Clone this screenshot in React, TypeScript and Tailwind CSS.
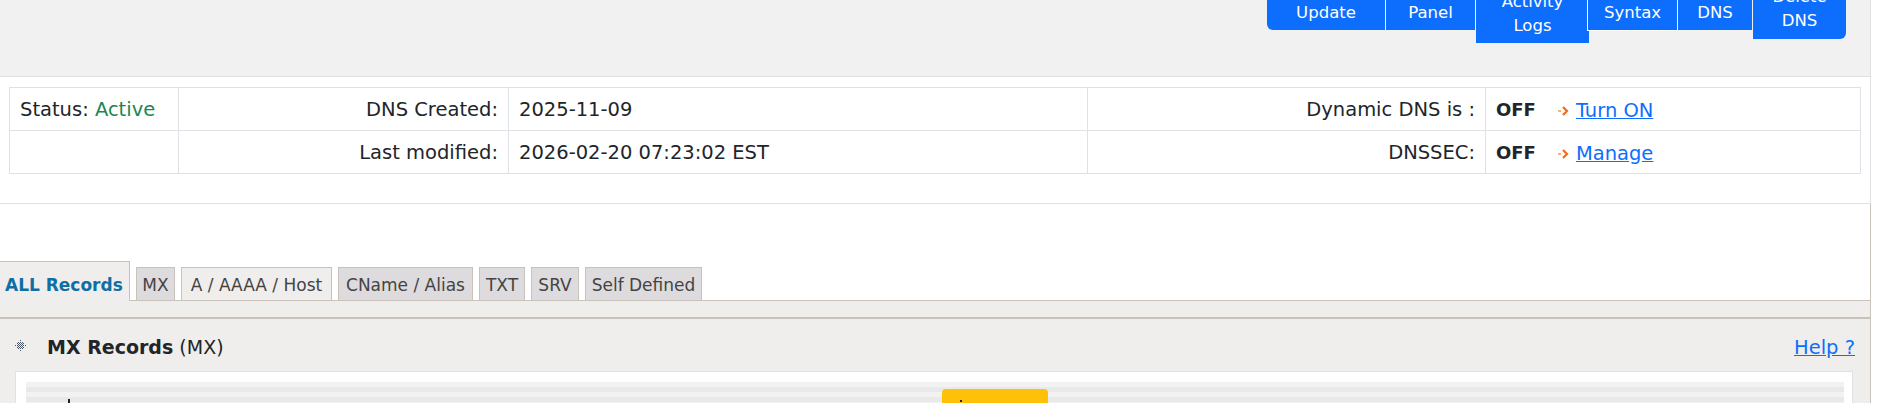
import React from 'react';

const Arrow = () => (
  <svg width="11" height="10" viewBox="0 0 11 10" className="shrink-0">
    <rect x="0" y="4" width="3" height="2" fill="#f9b27c" />
    <path d="M5 1 L9 5 L5 9" fill="none" stroke="#f26a1b" strokeWidth="2.2" />
  </svg>
);

const ActionLink = ({ label }: { label: string }) => (
  <span className="inline-flex items-center gap-[7px] ml-[22px]">
    <Arrow />
    <a href="#" className="text-[#0d6efd] underline">{label}</a>
  </span>
);

const buttons = [
  { lines: ['Update'], cls: 'w-[118px] -mt-[5px] h-[35px] rounded-bl-[6px]' },
  { lines: ['Panel'], cls: 'w-[89px] ml-px -mt-[5px] h-[35px]' },
  { lines: ['Activity', 'Logs'], cls: 'w-[113px] ml-px -mt-[16px] h-[59px]' },
  { lines: ['Syntax'], cls: 'w-[90px] -ml-[2px] -mt-[5px] h-[36px] pt-px relative border-l border-b border-white' },
  { lines: ['DNS'], cls: 'w-[74px] ml-px -mt-[5px] h-[35px]' },
  { lines: ['Delete', 'DNS'], cls: 'w-[93px] ml-px -mt-[21px] h-[60px] rounded-br-[6px]' },
];

const tabs = [
  { label: 'MX', cls: 'w-[39px] bg-[#dddbdd]' },
  { label: 'A / AAAA / Host', cls: 'w-[151px] bg-[#f0eeec]' },
  { label: 'CName / Alias', cls: 'w-[135px] bg-[#dddbdd]' },
  { label: 'TXT', cls: 'w-[46px] bg-[#dddbdd]' },
  { label: 'SRV', cls: 'w-[48px] bg-[#dddbdd]' },
  { label: 'Self Defined', cls: 'w-[117px] bg-[#dddbdd]' },
];

const cell = 'border border-[#dee2e6] px-[10px] pt-[2px]';

export default function App() {
  return (
    <div className="font-['DejaVu_Sans',sans-serif] h-[403px] w-[1882px] overflow-hidden bg-white text-[19.5px] text-[#212529] leading-6">
      <div className="w-[1871px] border-r border-[#e0e0e5]">
        <div className="h-[77px] bg-[#f1f1f1] border-b border-[#e0e0e5] flex justify-end items-start pr-[24px]">
          {buttons.map((b) => (
            <div key={b.lines.join()} className={`${b.cls} bg-[#0d6efd] text-white text-[16.5px] flex flex-col items-center justify-center`}>
              {b.lines.map((l) => <span key={l}>{l}</span>)}
            </div>
          ))}
        </div>

        <div className="h-[127px] border-b border-[#e0e0e5] pt-[10px] pl-[9px]">
          <table className="w-[1852px] table-fixed border-collapse border border-[#dee2e6]">
            <tbody>
              <tr className="h-[43px]">
                <td className={`w-[169px] ${cell}`}>Status: <span className="text-[#198754]">Active</span></td>
                <td className={`w-[330px] ${cell} text-right`}>DNS Created:</td>
                <td className={`w-[579px] ${cell}`}>2025-11-09</td>
                <td className={`w-[398px] ${cell} text-right`}>Dynamic DNS is :</td>
                <td className={cell}><b className="text-[18px]">OFF</b><ActionLink label="Turn ON" /></td>
              </tr>
              <tr className="h-[43px]">
                <td className={cell}></td>
                <td className={`${cell} text-right`}>Last modified:</td>
                <td className={cell}>2026-02-20 07:23:02 EST</td>
                <td className={`${cell} text-right`}>DNSSEC:</td>
                <td className={cell}><b className="text-[18px]">OFF</b><ActionLink label="Manage" /></td>
              </tr>
            </tbody>
          </table>
        </div>
      </div>

      <div className="w-[1871px] h-[199px] pt-[57px] border-r border-[#c9c2ba]">
        <div className="flex items-end border-b border-[#c9c2ba] h-[40px] text-[17px]">
          <div className="w-[130px] h-[40px] -mb-px bg-[#f0eeec] border-t border-r border-[#c9c2ba] font-bold text-[#0f6fa5] flex items-center pl-[5px] pt-[6px] z-10">ALL Records</div>
          <div className="flex items-end gap-[6px] ml-[6px]">
            {tabs.map((t) => (
              <div key={t.label} className={`${t.cls} h-[33px] pt-[2px] border border-b-0 border-[#c9c2ba] text-[#444] flex items-center justify-center whitespace-nowrap`}>{t.label}</div>
            ))}
          </div>
        </div>
        <div className="h-[18px] bg-[#f0eeec] border-b-2 border-[#c9c2ba]"></div>
        <div className="h-[200px] bg-[#f0eeec] pl-[15px] pr-[17px] pt-[15px]">
          <div className="flex items-center h-[24px]">
            <svg width="12" height="12" viewBox="0 0 12 12" className="shrink-0">
              <path d="M5.5 0v12M0 5.5h12M3.5 2v8M7.5 2v8M2 3.5h8M2 7.5h8" stroke="#4b5563" strokeWidth="1" strokeDasharray="1 1" fill="none" />
            </svg>
            <span className="ml-[20px] text-[19px] pt-[2px]"><b>MX Records</b> (MX)</span>
            <a href="#" className="ml-auto mr-[-2px] pt-[3px] text-[#0d6efd] underline">Help ?</a>
          </div>
          <div className="mt-[13px] bg-white border border-[#e0e0e5] pl-[10px] pr-[8px] pt-[10px] h-[60px]">
            <div className="h-[40px] relative bg-[repeating-linear-gradient(to_bottom,#f2f2f2_0,#f2f2f2_5px,#e9e9e9_5px,#e9e9e9_10px)]">
              <div className="absolute top-[17px] left-[42px] w-[2px] h-[4px] bg-[#222]"></div>
              <div className="absolute top-[7px] left-[916px] w-[106px] h-[40px] rounded-t-[4px] bg-[#ffc107]">
                <div className="ml-[18px] mt-[11px] w-[2px] h-[2px] bg-[#222]"></div>
              </div>
            </div>
          </div>
        </div>
      </div>
    </div>
  );
}
